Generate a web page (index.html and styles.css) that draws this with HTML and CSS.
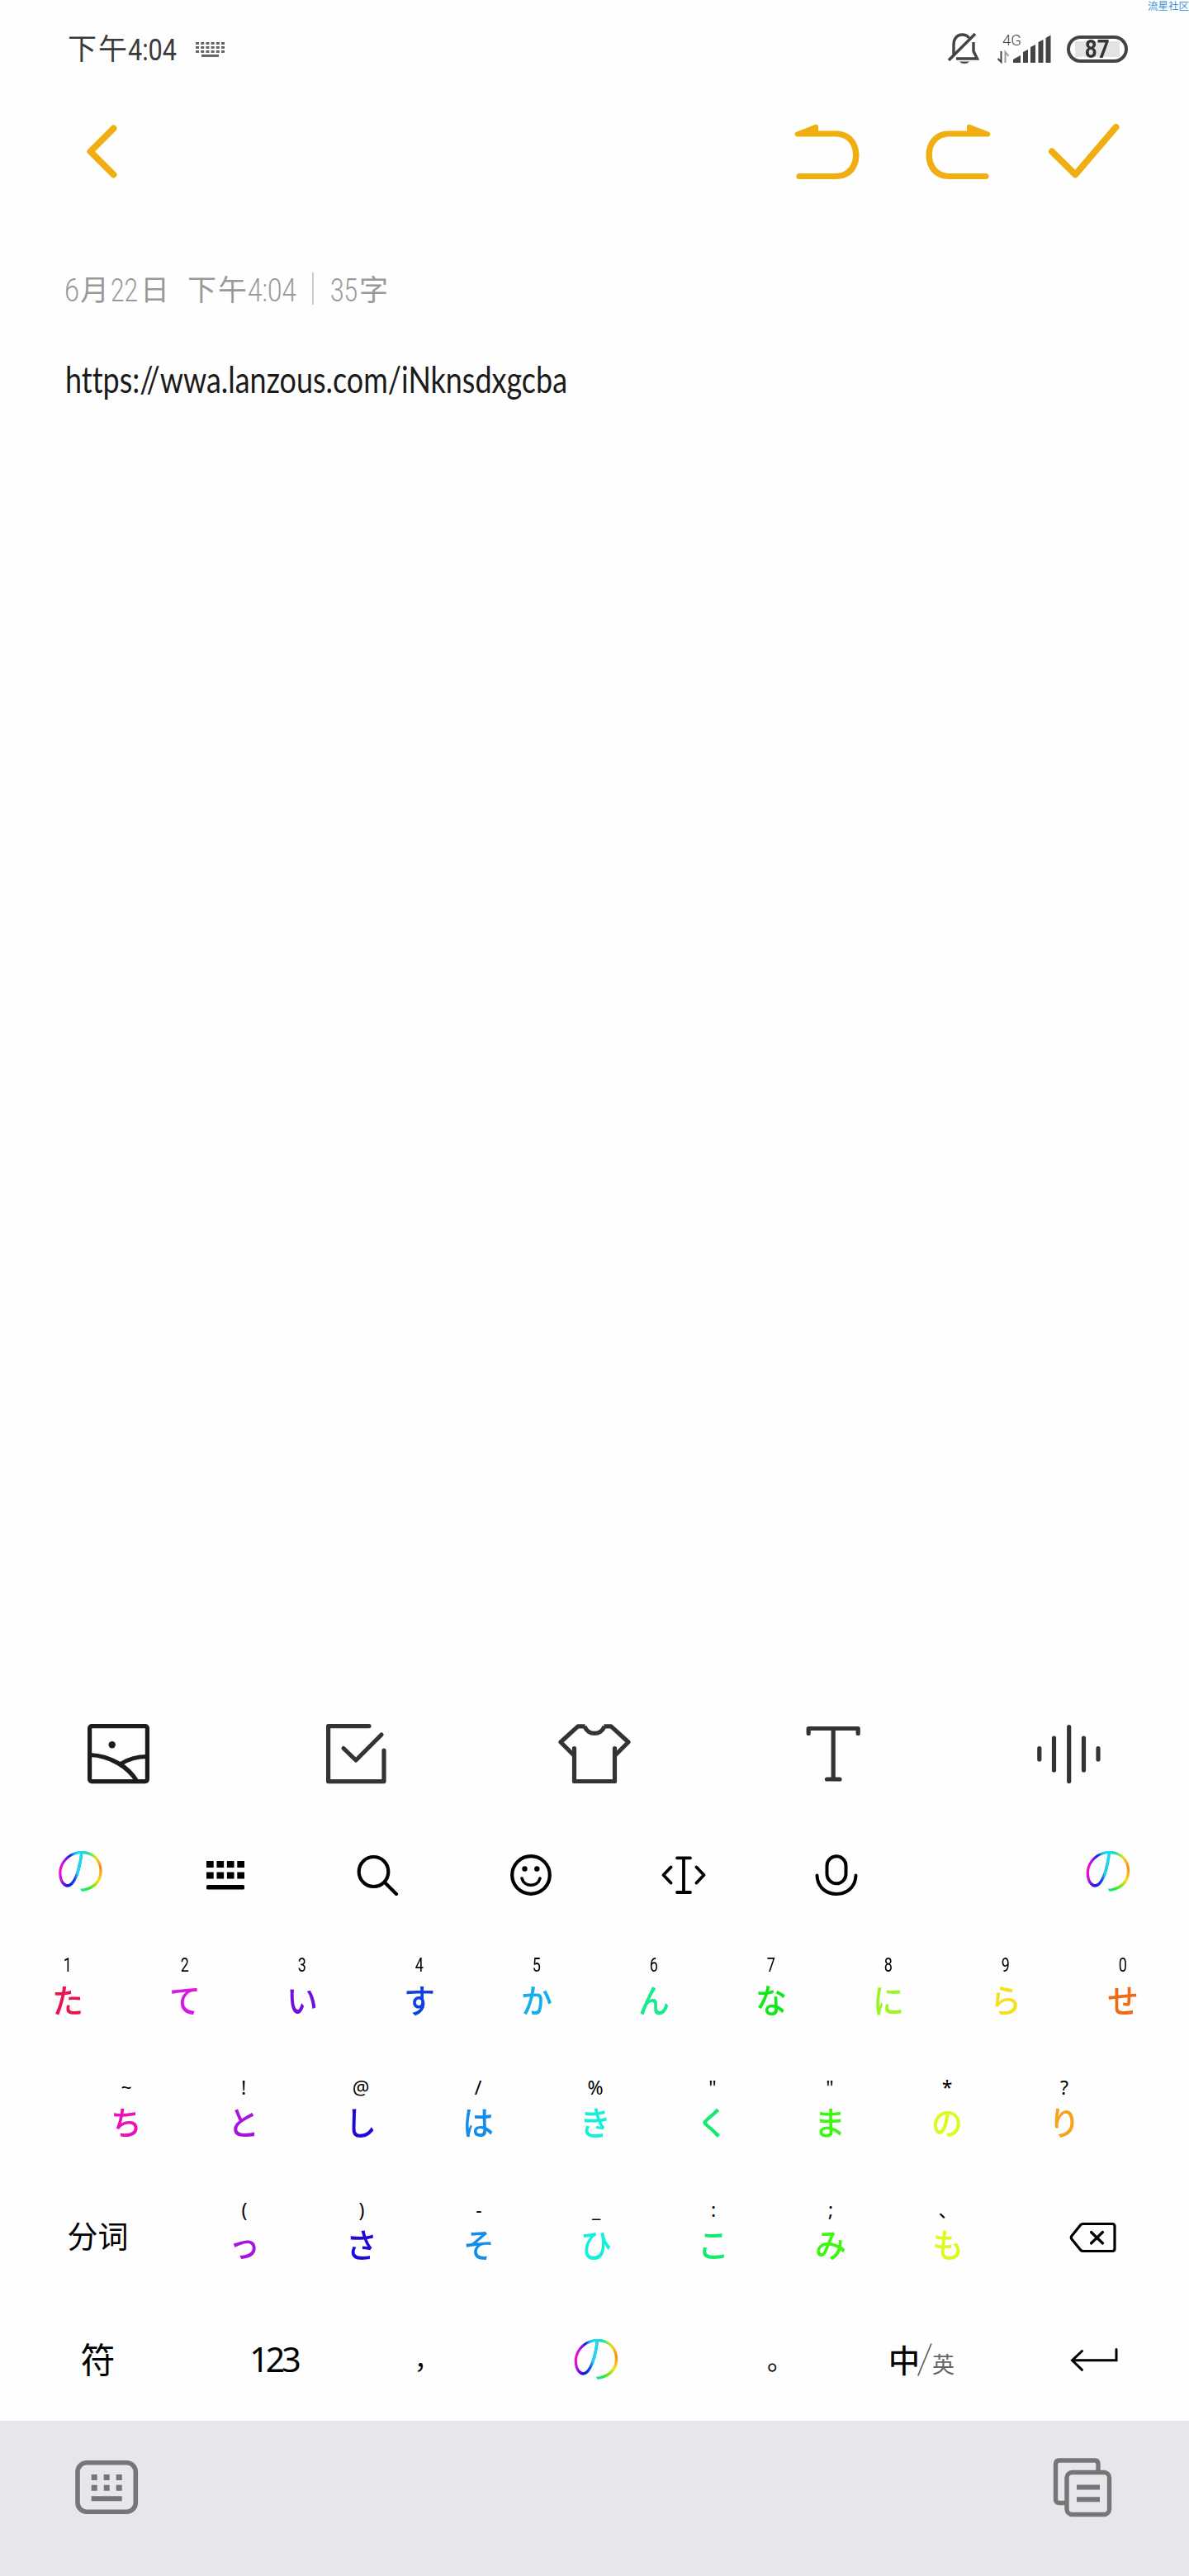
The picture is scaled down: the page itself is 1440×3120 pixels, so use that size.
FILE: index.html
```html
<!DOCTYPE html>
<html lang="zh-CN">
<head>
<meta charset="utf-8">
<title>便签</title>
<link rel="stylesheet" href="styles.css">
</head>
<body>
<div class="screen">
  <div class="watermark">流星社区</div>

  <header class="status">
    <svg class="lcd dark" width="134" height="44" viewBox="82 37 134 44">
      <text class="han" x="82" y="72" textLength="72">下午</text>
      <text class="num" x="155" y="73" textLength="59" lengthAdjust="spacingAndGlyphs">4:04</text>
    </svg>
    <svg class="ime" width="36" height="20" viewBox="0 0 36 20">
      <path d="M0 2.500h35M0 7.500h35M0 12.500h35" stroke="#666" stroke-width="3" stroke-dasharray="4 2.200"/>
      <path d="M7 17.500h21" stroke="#666" stroke-width="3"/>
    </svg>
    <div class="status-right">
      <svg width="38" height="38" viewBox="1149 40 38 38" fill="none" stroke="#444" stroke-width="3.400">
        <path d="M1156 66V54c0-7 4-12 10-12 4 0 7 1.500 8.500 4M1180 51v11l4.500 9H1159"/>
        <path d="M1150 73 1182 41" stroke-width="3.600"/>
        <path d="M1163 74.500h12q-2 2.500-6 2.500t-6-2.500z" fill="#444" stroke="none"/>
      </svg>
      <svg class="signal" width="66" height="38" viewBox="1209 38 66 38">
        <text class="net" x="1215" y="53" textLength="23" lengthAdjust="spacingAndGlyphs">4G</text>
        <path d="M1213.500 60v13l-4-4" fill="none" stroke="#444" stroke-width="2"/>
        <path d="M1218.500 74V61l4 5" fill="none" stroke="#999" stroke-width="2"/>
        <path d="M1228 74v-4l9-5v9zM1240 74V61l6-3v16zM1249 74V55l6-3v22zM1258.500 74V49l6-3v28zM1267.500 74V44l6-3.500V74z" fill="#444"/>
      </svg>
      <div class="battery"><span>87</span></div>
    </div>
  </header>

  <nav class="topbar">
    <svg width="40" height="68" viewBox="104 150 40 68" class="gold"><path d="M137.500 155.500 109.500 183.500 137.500 211.500"/></svg>
    <div class="actions">
      <svg width="80" height="68" viewBox="962 150 80 68">
        <path d="M966 165.500a3 3 0 0 1-2-5.500L987 151q4-1 4 3v4.500h22c17 0 27.500 13 27.500 29.500S1030 217 1013 217H968a3.400 3.400 0 0 1 0-7h44c13 0 21-9.500 21-22.500s-8-22-21-22z" fill="#f0ae10"/>
      </svg>
      <svg width="80" height="68" viewBox="962 150 80 68">
        <path transform="translate(2004 0) scale(-1 1)" d="M966 165.500a3 3 0 0 1-2-5.500L987 151q4-1 4 3v4.500h22c17 0 27.500 13 27.500 29.500S1030 217 1013 217H968a3.400 3.400 0 0 1 0-7h44c13 0 21-9.500 21-22.500s-8-22-21-22z" fill="#f0ae10"/>
      </svg>
      <svg width="86" height="68" viewBox="1270 150 86 68" class="gold"><path d="M1274 183.500 1302.300 211.500 1351.500 154"/></svg>
    </div>
  </nav>

  <main class="note">
    <svg class="lcd gray" width="392" height="44" viewBox="79 328 392 44">
      <text class="num" x="78" y="365" textLength="18" lengthAdjust="spacingAndGlyphs">6</text>
      <text class="han" x="97" y="364">月</text>
      <text class="num" x="134" y="365" textLength="33" lengthAdjust="spacingAndGlyphs">22</text>
      <text class="han" x="170" y="364">日</text>
      <text class="han" x="227" y="364" textLength="72">下午</text>
      <text class="num" x="300" y="365" textLength="59" lengthAdjust="spacingAndGlyphs">4:04</text>
      <path d="M379 330v39" stroke="#ccc" stroke-width="2"/>
      <text class="num" x="400" y="365" textLength="33" lengthAdjust="spacingAndGlyphs">35</text>
      <text class="han" x="435" y="364">字</text>
    </svg>
    <svg class="url" width="612" height="60" viewBox="78 434 612 60">
      <text x="79" y="475.500" textLength="608" lengthAdjust="spacingAndGlyphs">https://wwa.lanzous.com/iNknsdxgcba</text>
    </svg>
  </main>

  <section class="tools">
    <svg width="76" height="74" viewBox="106 2087 76 74" fill="none" stroke="#1c1c1c" stroke-width="5.200">
      <rect x="108.600" y="2090.600" width="69.800" height="67" rx="2.500"/>
      <path d="M109 2125.500c24 1 46 14 57 32M147 2136c8-5 18-8.500 31-8.500"/>
      <circle cx="135.700" cy="2113.300" r="4.200" fill="#1c1c1c" stroke="none"/>
    </svg>
    <svg width="76" height="74" viewBox="394 2087 76 74" fill="none" stroke="#333" stroke-width="5.200" stroke-linecap="round" stroke-linejoin="round">
      <path d="M447 2090.600H397.600v67H465V2120"/><path d="M416 2117.500l15 14.500 31-31"/>
    </svg>
    <svg width="90" height="74" viewBox="675 2087 90 74" fill="none" stroke="#333" stroke-width="5.200" stroke-linejoin="round">
      <path d="M708.500 2090.800h-8.500L679 2110l16.500 16.500M731.500 2090.800h8.500L761 2110l-16.500 16.500M708 2090.800c4 11.500 20 11.500 24 0"/>
      <path d="M695.500 2117.500v40h49v-40" stroke-linecap="round"/>
    </svg>
    <svg width="68" height="74" viewBox="975 2087 68 74" fill="none" stroke="#333" stroke-width="5.200" stroke-linecap="round" stroke-linejoin="round">
      <path d="M979.200 2099.500v-6h60v6M1009.200 2094v61M1001.500 2155h15.500"/>
    </svg>
    <svg width="80" height="74" viewBox="1255 2087 80 74" fill="none" stroke="#333" stroke-width="5.200" stroke-linecap="round">
      <path d="M1258.800 2117.500v13.500M1276.500 2105v39M1294.700 2091.500v66M1312.500 2105v39M1330 2117.500v13.500"/>
    </svg>
  </section>

  <section class="imebar">
    <span class="logo">の</span>
    <svg width="48" height="52" viewBox="248 2245 48 52">
      <path d="M249 2258h46M249 2271.500h46" stroke="#000" stroke-width="8" stroke-dasharray="8.700 3.730"/>
      <rect x="249" y="2283" width="46" height="5.500" rx="1.500"/>
    </svg>
    <svg width="52" height="52" viewBox="432 2245 52 52" fill="none" stroke="#000" stroke-width="4.200" stroke-linecap="round">
      <ellipse cx="452.500" cy="2267" rx="17.800" ry="18"/><path d="M466 2280l14 14"/>
    </svg>
    <svg width="52" height="52" viewBox="616 2245 52 52" fill="none" stroke="#000" stroke-width="4.200" stroke-linecap="round">
      <circle cx="642" cy="2271" r="22.800"/><path d="M631 2275c3 11 19 11 22 0" stroke-width="3.600"/>
      <g fill="#000" stroke="none"><circle cx="634.500" cy="2263.500" r="3.200"/><circle cx="649.300" cy="2263.500" r="3.200"/></g>
    </svg>
    <svg width="56" height="52" viewBox="799 2245 56 52" fill="none" stroke="#000" stroke-width="3.800" stroke-linecap="round" stroke-linejoin="round">
      <path d="M819 2250.300h16M819 2292h16M827 2251v41M811.500 2261.500l-9 9.500 9 9.500M842.500 2261.500l9 9.500-9 9.500"/>
    </svg>
    <svg width="54" height="52" viewBox="985 2245 54 52" fill="none" stroke="#000" stroke-width="4" stroke-linecap="round">
      <rect x="1000.500" y="2248.300" width="23" height="33" rx="11.500"/><path d="M988.500 2271.500c1 30 46 30 47 0"/>
    </svg>
    <span class="logo logo-end">の</span>
  </section>

  <section class="keyboard">
    <div class="row r1">
      <div class="key digit c1"><i>1</i><b>た</b></div>
      <div class="key digit c2"><i>2</i><b>て</b></div>
      <div class="key digit c3"><i>3</i><b>い</b></div>
      <div class="key digit c4"><i>4</i><b>す</b></div>
      <div class="key digit c5"><i>5</i><b>か</b></div>
      <div class="key digit c6"><i>6</i><b>ん</b></div>
      <div class="key digit c7"><i>7</i><b>な</b></div>
      <div class="key digit c8"><i>8</i><b>に</b></div>
      <div class="key digit c9"><i>9</i><b>ら</b></div>
      <div class="key digit c10"><i>0</i><b>せ</b></div>
    </div>
    <div class="row r2">
      <div class="key d1"><i>~</i><b>ち</b></div>
      <div class="key d2"><i>!</i><b>と</b></div>
      <div class="key d3"><i>@</i><b>し</b></div>
      <div class="key d4"><i>/</i><b>は</b></div>
      <div class="key d5"><i>%</i><b>き</b></div>
      <div class="key d6"><i>"</i><b>く</b></div>
      <div class="key d7"><i>"</i><b>ま</b></div>
      <div class="key d8"><i>*</i><b>の</b></div>
      <div class="key d9"><i>?</i><b>り</b></div>
    </div>
    <div class="row r3">
      <div class="fn split">分词</div>
      <div class="key d2"><i>(</i><b>っ</b></div>
      <div class="key d3"><i>)</i><b>さ</b></div>
      <div class="key d4"><i>-</i><b>そ</b></div>
      <div class="key d5"><i>_</i><b>ひ</b></div>
      <div class="key d6"><i>:</i><b>こ</b></div>
      <div class="key d7"><i>;</i><b>み</b></div>
      <div class="key d8"><i>、</i><b>も</b></div>
      <div class="fn">
        <svg width="58" height="38" viewBox="1294 2691 58 38" fill="none" stroke="#000" stroke-width="3.200" stroke-linejoin="round" stroke-linecap="round">
          <path d="M1310.500 2693.500H1346q3 0 3 3v27q0 3-3 3h-35.500q-1.500 0-3-1.500L1297 2712q-1.500-2 0-4l10.500-13q1.500-1.500 3-1.500z"/>
          <path d="M1320.500 2703.500l14 13.500M1334.500 2703.500l-14 13.500"/>
        </svg>
      </div>
    </div>
    <div class="row r4">
      <div class="fn sym">符</div>
      <div class="fn n123">123</div>
      <div class="fn comma">，</div>
      <div class="fn"><span class="logo">の</span></div>
      <div class="fn stop">。</div>
      <div class="fn lang"><span class="zh">中</span><svg width="18" height="40" viewBox="0 0 18 40"><path d="M.8 39.500 17 .5" stroke="#666" stroke-width="1.800"/></svg><span class="en">英</span></div>
      <div class="fn">
        <svg width="58" height="30" viewBox="1294 2843 58 30" fill="none" stroke="#000" stroke-width="3" stroke-linecap="round">
          <path d="M1350 2845.500v13.300H1297M1308.500 2847.500l-12 11.300 12 11.500"/>
        </svg>
      </div>
    </div>
  </section>

  <footer class="navbar">
    <svg width="78" height="68" viewBox="90 2980 78 68" fill="none" stroke="#757777">
      <rect x="94" y="2983.700" width="70.300" height="59.500" rx="11" stroke-width="5.600"/>
      <path d="M110.700 3001.500h37M110.700 3014.200h37" stroke-width="7" stroke-dasharray="7 8"/>
      <path d="M110.700 3027.200h37" stroke-width="6"/>
    </svg>
    <svg width="74" height="74" viewBox="1274 2976 74 74" fill="none" stroke="#757777" stroke-width="5.400">
      <path d="M1290 3031.500h-7q-4.500 0-4.500-4.500v-42.500q0-4.500 4.500-4.500h43q4 0 4 4.500V2992"/>
      <rect x="1292" y="2994.500" width="51.500" height="51" rx="6.500"/>
      <path d="M1304 3012.500h28M1304 3027.300h28" stroke-width="6"/>
    </svg>
  </footer>
</div>
</body>
</html>
```
FILE: styles.css
```css
* { box-sizing: border-box; }
body {
  margin: 0;
  background: #fefefe;
  font-family: "Noto Sans CJK SC", sans-serif;
  color: #000;
}
svg { display: block; flex: none; overflow: visible; }
.screen {
  position: relative;
  width: 1440px;
  height: 3120px;
  overflow: hidden;
  display: flex;
  flex-direction: column;
}
.watermark {
  position: absolute;
  top: -2px;
  right: 0;
  font-size: 12.5px;
  line-height: 18px;
  color: #3d94de;
}

/* Status bar */
.status {
  height: 118px;
  flex: none;
  display: flex;
  align-items: center;
  padding: 0 74px 0 82px;
}
.lcd .num { font-family: Roboto, sans-serif; font-weight: 300; font-size: 38px; }
.lcd .han { font-size: 35px; font-weight: 400; }
.dark { fill: #3a3a3a; }
.dark .num { font-size: 37px; font-weight: 400; }
.gray { fill: #999; }
.ime { margin: 1px 0 0 21px; }
.status-right { margin-left: auto; display: flex; align-items: center; }
.signal { margin: 0 18px 0 22px; }
.net { font-family: Roboto, sans-serif; font-weight: 300; font-size: 18px; fill: #444; }
.battery {
  width: 74px;
  height: 33px;
  border: 4px solid #444;
  border-radius: 17px;
  background: linear-gradient(#e3e3e3, #e3e3e3) center / 54px 19px no-repeat;
  display: flex;
  align-items: center;
  justify-content: center;
  font: 700 31px/25px Roboto, sans-serif;
  color: #333;
}
.battery span { transform: scaleX(.84); }

/* Title bar */
.topbar {
  height: 131px;
  flex: none;
  display: flex;
  align-items: center;
  justify-content: space-between;
  padding: 0 84px 0 104px;
}
.actions { display: flex; gap: 78px; }
.actions svg:last-child { margin-left: -8px; }
.gold { fill: none; stroke: #f0ae10; stroke-width: 8; stroke-linecap: round; stroke-linejoin: round; }

/* Note text */
.note {
  flex: 1;
  padding: 79px 0 0 79px;
}
.url {
  margin: 62px 0 0 -1px;
  font-family: Lato, sans-serif;
  font-size: 44px;
  font-variant-ligatures: none;
  fill: #1a1a1a;
}

/* Formatting tools */
.tools {
  height: 74px;
  flex: none;
  display: grid;
  grid-template-columns: 288px 281px 300px 280px 80px;
  padding-left: 106px;
}

/* Input method bar */
.imebar {
  height: 194px;
  flex: none;
  display: grid;
  grid-template-columns: 165px repeat(5, 185px) 1fr;
  justify-items: center;
  align-items: center;
  padding: 25px 65px 0 15px;
}
.imebar .logo-end { justify-self: end; }
.logo {
  width: 66px;
  height: 66px;
  margin-bottom: 22px;
  font: 300 66px/66px "Noto Sans CJK JP", sans-serif;
  color: transparent;
  background:
    radial-gradient(ellipse 15px 24px at 52% 46%, #17d9f2 60%, transparent 100%),
    conic-gradient(from 0deg at 50% 54%, #12e0c0 0, #1eea2a 18deg, #9bf01a 42deg, #f2d21a 60deg, #f88a10 88deg, #f6e01c 125deg, #2aee20 158deg, #12d8e8 185deg, #1515e0 215deg, #c010e8 240deg, #f510c0 270deg, #c010e8 290deg, #1a1ae0 320deg, #12c8e8 348deg, #12e0c0 360deg);
  -webkit-background-clip: text;
  background-clip: text;
}
.row .logo { margin-bottom: 15px; }

/* Keyboard */
.keyboard { height: 577px; flex: none; }
.row { display: grid; height: 148px; }
.r1 { grid-template-columns: repeat(10, 142px); padding-left: 11px; }
.r2 { grid-template-columns: repeat(9, 142px); padding-left: 82px; }
.r3 { grid-template-columns: 213px repeat(7, 142px) 209px; padding-left: 12px; }
.r4 { grid-template-columns: 213px 213px 142px 284px 142px 214px 209px; height: 133px; padding-left: 12px; }
.key {
  display: flex;
  flex-direction: column;
  align-items: center;
  padding-top: 10px;
}
.key i {
  font: 400 23px/30px "Noto Sans", "Noto Sans CJK SC", sans-serif;
  height: 30px;
}
.digit i {
  font-family: Roboto, sans-serif;
  font-size: 24px;
  transform: scaleX(.75);
}
.key b {
  font: 500 40px/50px "Noto Sans CJK JP", sans-serif;
  margin-top: 1px;
  transform: scaleX(.95);
}
.c1 b { color: #e81450; }
.c2 b { color: #d818e0; }
.c3 b { color: #7010d8; }
.c4 b { color: #1040e0; }
.c5 b { color: #18aeea; }
.c6 b { color: #18ea90; }
.c7 b { color: #10e818; }
.c8 b { color: #9cf520; }
.c9 b { color: #f5e020; }
.c10 b { color: #ee6a14; }
.d1 b { color: #ec10b8; }
.d2 b { color: #a814dc; }
.d3 b { color: #2008d8; }
.d4 b { color: #148ce8; }
.d5 b { color: #14f0dc; }
.d6 b { color: #14ea6c; }
.d7 b { color: #3cf810; }
.d8 b { color: #dcfa1c; }
.d9 b { color: #f6a41c; }
.fn { display: flex; align-items: center; justify-content: center; }
.r3 .fn { padding-bottom: 31px; }
.r4 .fn { padding-bottom: 15px; }
.r3 .split { font-size: 37px; padding-bottom: 37px; }
.r4 .sym { font-size: 42px; padding-bottom: 20px; }
.r4 .n123 { font: 400 41px "Noto Sans", sans-serif; letter-spacing: -4px; padding-bottom: 17px; }
.comma, .stop { font-size: 32px; }
.r4 .comma { padding: 0 0 21px 17px; }
.r4 .stop { padding: 0 0 19px 20px; }
.r4 .lang { padding: 0 0 15px 6px; }
.zh { font-size: 38px; font-weight: 400; -webkit-text-stroke: .5px #000; padding-bottom: 4px; }
.zh + svg { margin-left: -3px; }
.en { font-size: 27px; color: #666; padding-top: 8px; }

/* System navigation */
.navbar {
  height: 188px;
  flex: none;
  background: #e6e7ea;
  display: flex;
  justify-content: space-between;
  align-items: center;
  padding: 0 92px 26px 90px;
}
```
